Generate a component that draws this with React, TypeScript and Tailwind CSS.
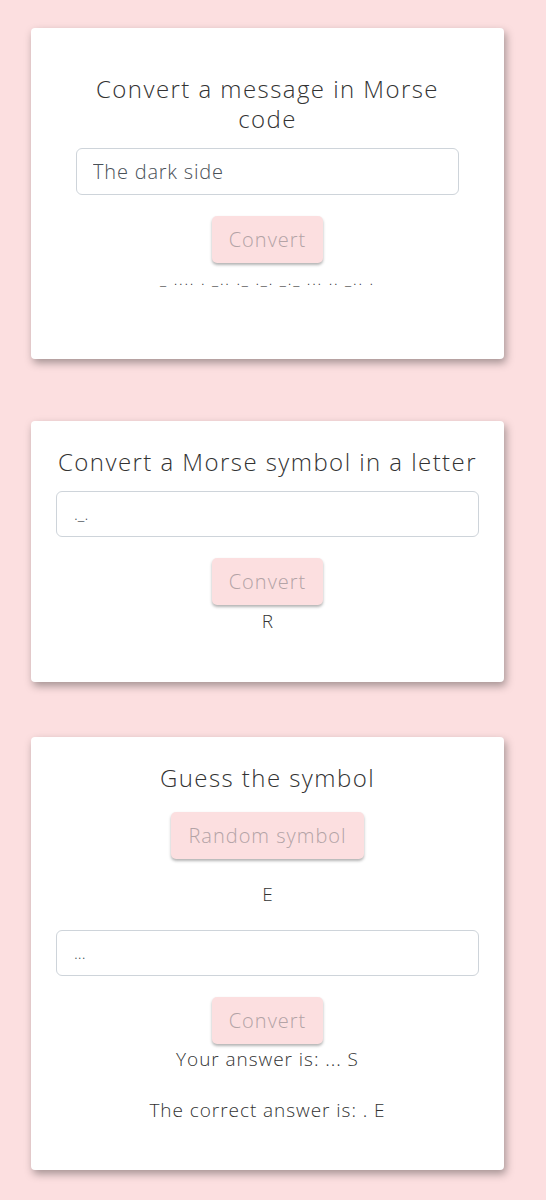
import { useState } from "react"

const font = { fontFamily: "'Open Sans', 'Liberation Sans', sans-serif" }

function PinkButton({ label }: { label: string }) {
  return (
    <button className="h-[47px] px-[17px] rounded-[5px] bg-[#fcdfe0] text-[#b3a3a6] text-[20px] font-light tracking-[0.05em] shadow-[0_2px_3px_rgba(0,0,0,0.3)]">
      {label}
    </button>
  )
}

export default function App() {
  const [message] = useState("The dark side")
  const [symbol] = useState("._.")
  const [guess] = useState("...")

  return (
    <div className="min-h-[1200px] bg-[#fcdfe0] pt-[28px] pb-10 pl-[31px] pr-[42px] text-[#333] font-light" style={font}>
      {/* Message -> Morse */}
      <div className="bg-white rounded-[4px] shadow-[2px_4px_8px_rgba(0,0,0,0.35)] pt-[46px] pb-[68px] px-[45px] flex flex-col items-center">
        <h2 className="text-[24px] leading-[30px] text-center tracking-[0.06em]">Convert a message in Morse code</h2>
        <input
          readOnly
          value={message}
          className="mt-[14px] w-full h-[47px] px-[16px] border border-[#ced4da] rounded-[6px] text-[20px] tracking-[0.04em] text-[#495057] outline-none"
        />
        <div className="mt-[21px]">
          <PinkButton label="Convert" />
        </div>
        <p className="mt-[4px] text-[15px] leading-[24px] tracking-[0.12em]">_ .... . _.. ._ ._. _._ ... .. _.. .</p>
      </div>

      {/* Morse -> Letter */}
      <div className="mt-[62px] bg-white rounded-[4px] shadow-[2px_4px_8px_rgba(0,0,0,0.35)] pt-[26px] pb-[49px] px-[25px] flex flex-col items-center">
        <h2 className="text-[24px] leading-[30px] text-center tracking-[0.06em]">Convert a Morse symbol in a letter</h2>
        <input
          readOnly
          value={symbol}
          className="mt-[14px] w-full h-[46px] px-[17px] border border-[#ced4da] rounded-[6px] text-[16px] text-[#495057] outline-none"
        />
        <div className="mt-[21px]">
          <PinkButton label="Convert" />
        </div>
        <p className="mt-[4px] text-[19px] leading-[24px]">R</p>
      </div>

      {/* Guess */}
      <div className="mt-[55px] bg-white rounded-[4px] shadow-[2px_4px_8px_rgba(0,0,0,0.35)] pt-[26px] pb-[48px] px-[25px] flex flex-col items-center">
        <h2 className="text-[24px] leading-[30px] text-center tracking-[0.06em]">Guess the symbol</h2>
        <div className="mt-[19px]">
          <PinkButton label="Random symbol" />
        </div>
        <p className="mt-[23px] text-[19px] leading-[24px]">E</p>
        <input
          readOnly
          value={guess}
          className="mt-[24px] w-full h-[46px] px-[17px] border border-[#ced4da] rounded-[6px] text-[16px] text-[#495057] outline-none"
        />
        <div className="mt-[21px]">
          <PinkButton label="Convert" />
        </div>
        <p className="mt-[3px] text-[19px] leading-[24px] tracking-[0.05em]">Your answer is: ... S</p>
        <p className="mt-[27px] text-[19px] leading-[24px] tracking-[0.05em]">The correct answer is: . E</p>
      </div>
    </div>
  )
}
